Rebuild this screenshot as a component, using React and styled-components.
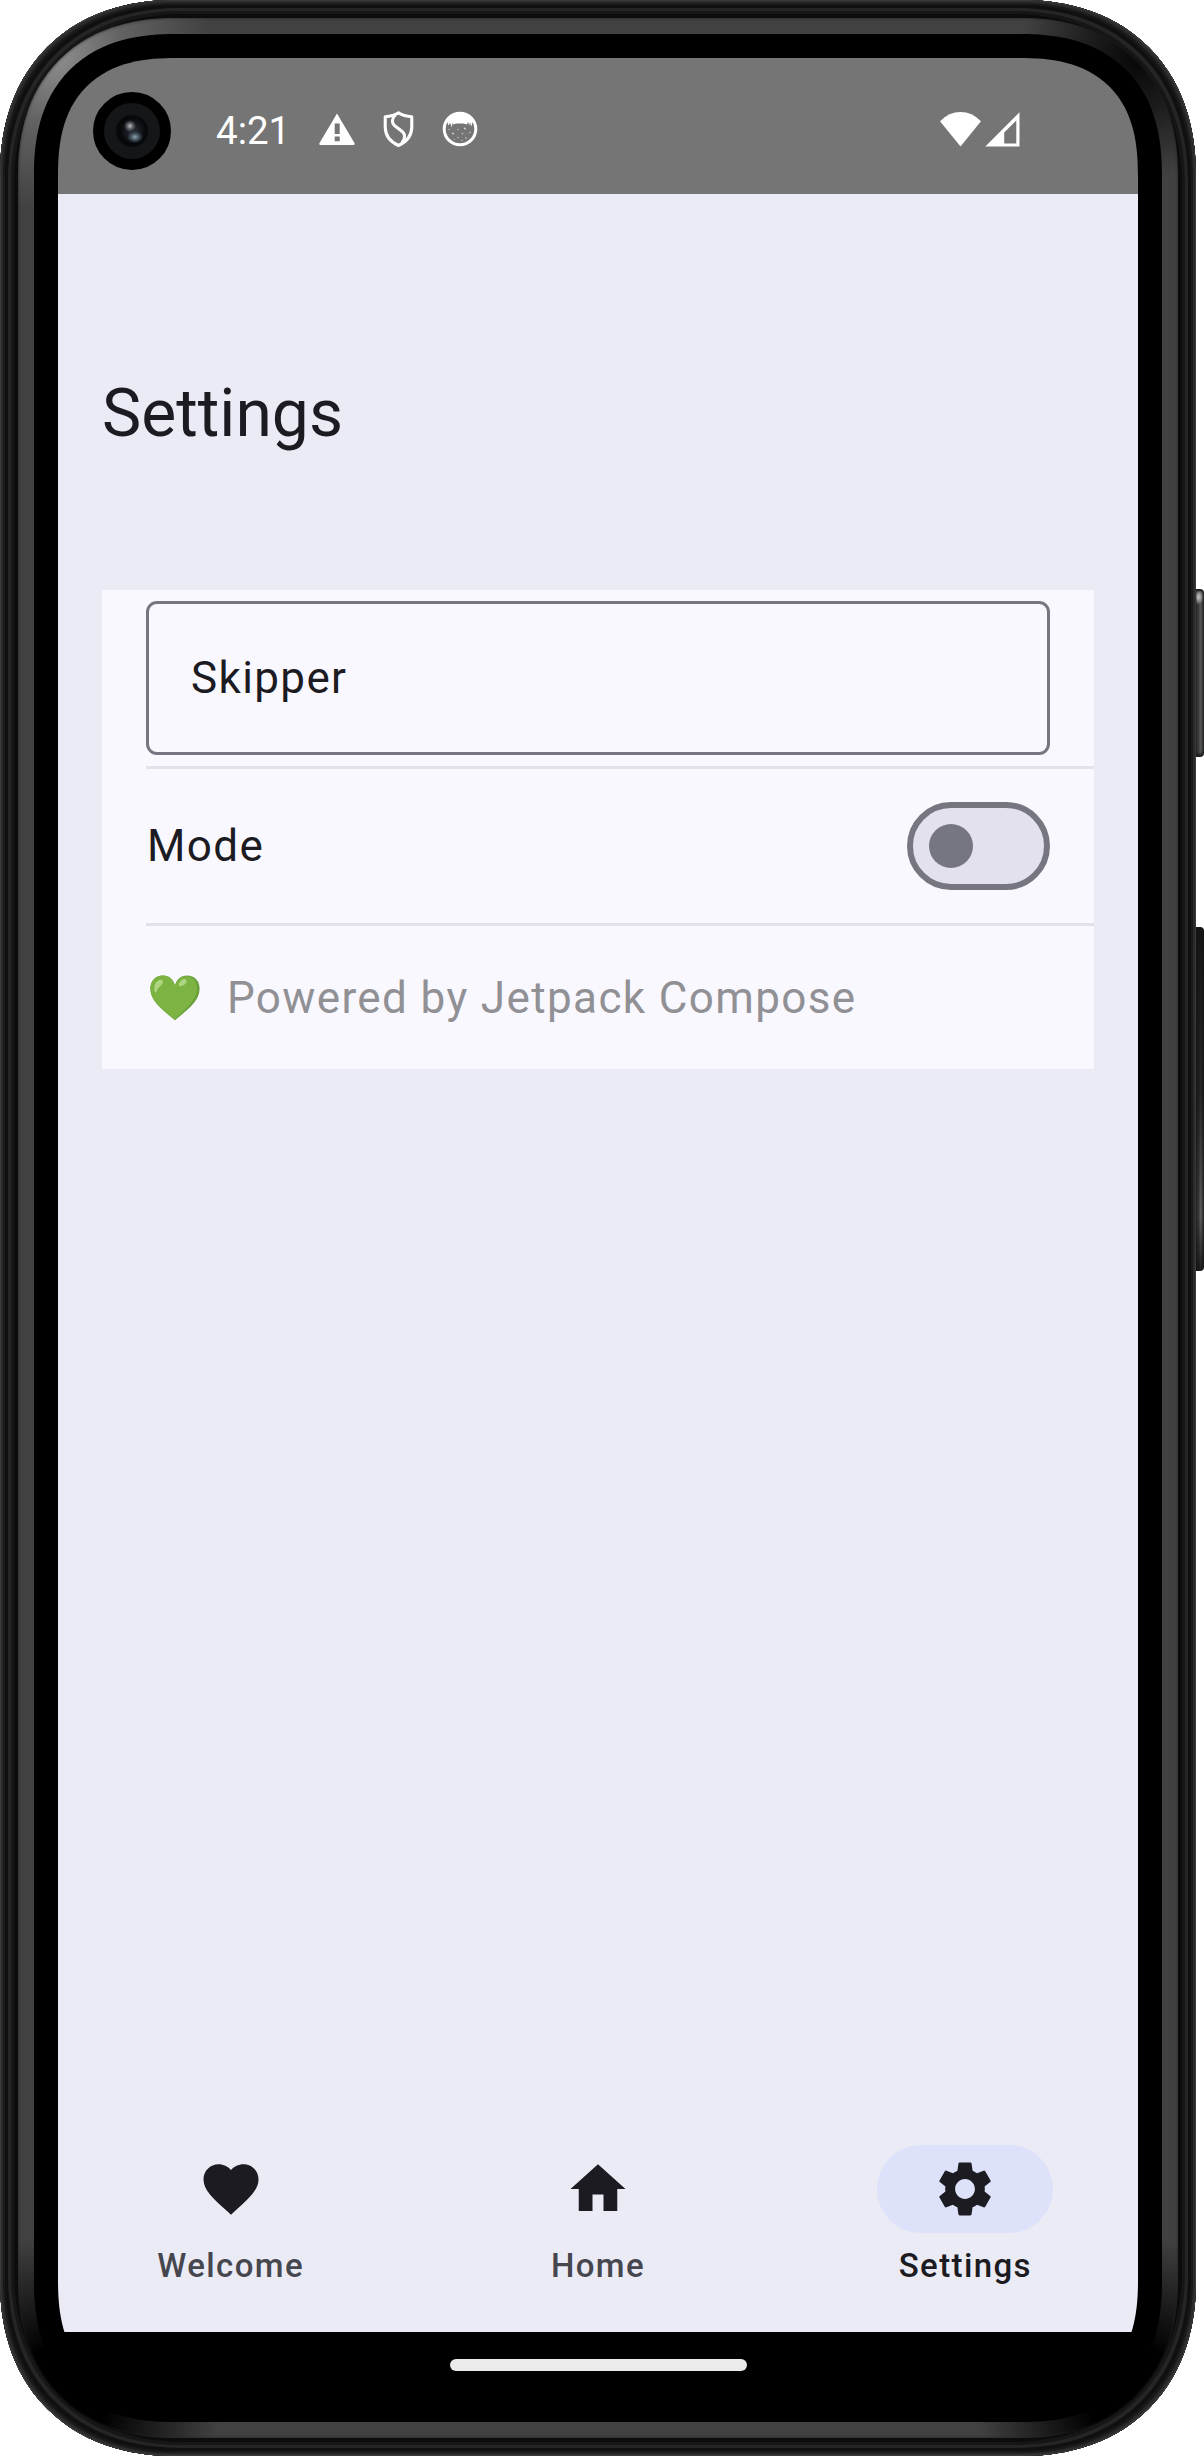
import React from "react";
import styled, { createGlobalStyle, css } from "styled-components";

const GlobalStyle = createGlobalStyle`
  * { box-sizing: border-box; }
  body { margin: 0; background: #ffffff; font-family: Roboto, "Liberation Sans", sans-serif; }
  svg { display: block; flex: none; }
`;

/* Continuous-curvature corners, with plain rounding where corner-shape is unknown. */
const corner = (round, smooth, curve) => css`
  border-radius: ${round}px;
  @supports (corner-shape: superellipse(1.2)) {
    border-radius: ${smooth}px;
    corner-shape: superellipse(${curve});
  }
`;

const Device = styled.div`
  display: flex;
  align-items: flex-start;
  width: 1204px;
  height: 2456px;
`;

const Shell = styled.div`
  width: 1196px;
  height: 2456px;
  padding: 18px;
  ${corner(160, 175, 1.14)}
  background: #101010;
  box-shadow:
    inset 0 0 0 1px #3a3a39,
    inset 0 0 0 3px #2a2a29,
    inset 0 0 0 5px #191919,
    inset 0 0 0 8px #101010,
    inset 0 0 0 11px #252525,
    inset 0 0 0 14px #161616,
    inset 0 0 0 18px #0c0c0c;
`;

const Band = styled.div`
  height: 100%;
  padding: 16px;
  ${corner(142, 157, 1.17)}
  background:
    radial-gradient(circle 160px at 34px 34px, rgba(150, 150, 150, 0.95), rgba(120, 120, 120, 0.6) 45%, transparent),
    radial-gradient(circle 120px at 1122px 40px, rgba(4, 4, 4, 0.95), rgba(10, 10, 10, 0.7) 40%, transparent),
    radial-gradient(circle 160px at 42px 2378px, #000 30%, transparent),
    radial-gradient(circle 160px at 1118px 2378px, #000 30%, transparent),
    #414141;
  box-shadow: inset 0 0 3px #242424;
`;

const Glass = styled.div`
  height: 100%;
  padding: 24px;
  ${corner(124, 141, 1.24)}
  background: #000000;
`;

const Screen = styled.div`
  position: relative;
  display: flex;
  flex-direction: column;
  height: 100%;
  overflow: hidden;
  ${corner(103, 118, 1.32)}
  background: #000000;
`;

const StatusBar = styled.header`
  display: flex;
  align-items: center;
  height: 136px;
  flex: none;
  padding: 6px 118px 0 158px;
  background: #757575;
  color: #ffffff;
`;

const Clock = styled.span`
  width: 74px;
  margin-right: 29px;
  padding-top: 3px;
  font-size: 38.5px;
  line-height: 46px;
`;

const Notifications = styled.div`
  display: flex;
  align-items: center;
  gap: 28px;
  flex: 1;
`;

const Signals = styled.div`
  display: flex;
  align-items: center;
  gap: 4px;
`;

const Camera = styled.div`
  position: absolute;
  top: 34px;
  left: 35px;
  width: 78px;
  height: 78px;
  border-radius: 50%;
  border: 11px solid #000000;
  background:
    radial-gradient(circle 6px at 26px 23px, #b9bcc2, rgba(120, 124, 132, 0.6) 55%, transparent),
    radial-gradient(ellipse 8px 6px at 31px 34px, #8fa3ad, rgba(80, 100, 112, 0.7) 55%, transparent),
    radial-gradient(circle 13px at 29px 28px, #20242a 30%, transparent),
    radial-gradient(circle at 28px 28px, #07080a 15px, #151618 17px);
`;

const Content = styled.main`
  flex: 1;
  padding: 176px 44px 0;
  background: #ebebf5;
`;

const Title = styled.h1`
  margin: 0;
  height: 88px;
  font-size: 66px;
  font-weight: 400;
  line-height: 88px;
  color: #1b1b21;
`;

const Card = styled.section`
  margin-top: 132px;
  padding-left: 44px;
  background: #f9f8ff;
`;

const FieldRow = styled.div`
  height: 179px;
  padding: 11px 44px 0 0;
  border-bottom: 3px solid #e3e1ec;
`;

const Field = styled.div`
  display: flex;
  align-items: center;
  height: 154px;
  padding: 0 41px;
  border: 3px solid #767680;
  border-radius: 11px;
`;

const Row = styled.div`
  display: flex;
  align-items: center;
  height: ${(p) => p.$height}px;
  padding-right: 44px;
  border-bottom: ${(p) => (p.$divided ? "3px solid #e3e1ec" : "none")};
`;

const BodyText = styled.span`
  padding-left: 1px;
  font-size: 44px;
  line-height: 66px;
  letter-spacing: 1.375px;
  color: ${(p) => (p.$muted ? "#909095" : "#1b1b21")};
`;

const Spacer = styled.div`
  flex: 1;
`;

const Switch = styled.div`
  display: flex;
  align-items: center;
  width: 143px;
  height: 88px;
  padding-left: 16px;
  border: 6px solid #767680;
  border-radius: 44px;
  background: #e2e1ec;
`;

const Thumb = styled.div`
  width: 44px;
  height: 44px;
  border-radius: 50%;
  background: #767680;
`;

const HeartSlot = styled.div`
  width: 80px;
  padding-left: 4px;
`;

const NavBar = styled.nav`
  display: flex;
  gap: 22px;
  height: 220px;
  flex: none;
  padding-top: 33px;
  background: #ebebf5;
`;

const NavItem = styled.div`
  display: flex;
  flex: 1;
  flex-direction: column;
  align-items: center;
  gap: 11px;
  color: ${(p) => (p.$active ? "#1b1b21" : "#46464f")};
`;

const Indicator = styled.div`
  display: flex;
  align-items: center;
  justify-content: center;
  width: 176px;
  height: 88px;
  border-radius: 44px;
  color: #1b1b21;
  background: ${(p) => (p.$active ? "#dde1f9" : "transparent")};
`;

const NavLabel = styled.span`
  font-size: 33px;
  font-weight: 500;
  line-height: 44px;
  letter-spacing: 1.375px;
`;

const GestureBar = styled.footer`
  display: flex;
  justify-content: center;
  height: 66px;
  flex: none;
  padding-top: 27px;
  background: #000000;
`;

const GesturePill = styled.div`
  width: 297px;
  height: 12px;
  border-radius: 6px;
  background: #ebebeb;
`;

const SideKeys = styled.div`
  display: flex;
  flex-direction: column;
  gap: 170px;
  width: 8px;
  padding-top: 589px;
`;

const PowerKey = styled.div`
  height: 168px;
  border-radius: 0 4px 4px 0;
  background:
    radial-gradient(ellipse 7px 8px at 1px 8px, #e6e6e6, transparent),
    linear-gradient(90deg, #303131, #3d3e3e 30%, #555656 60%, #2b2c2c);
  box-shadow: inset 0 2px 2px #1d1e1e, inset 0 -3px 3px #1d1e1e;
`;

const VolumeKey = styled.div`
  height: 344px;
  border-radius: 0 4px 4px 0;
  background:
    linear-gradient(180deg, rgba(18, 18, 18, 0.95), rgba(18, 18, 18, 0.7) 50%, transparent 84%, rgba(18, 18, 18, 0.85)),
    linear-gradient(90deg, #202020, #3c3c3c 35%, #606060 60%, #1d1d1d);
`;

const WarningIcon = () => (
  <svg width="36" height="32" viewBox="0 0 36 32">
    <path
      fill="#fff"
      fillRule="evenodd"
      d="M18 0.5 L35.6 30.3 Q36.2 31.8 34.8 31.9 L1.2 31.9 Q-0.2 31.8 0.4 30.3Z M15.7 10.5v10.6h5V10.5z M15.7 23.6v4.7h5v-4.7z"
    />
  </svg>
);

const ShieldIcon = () => (
  <svg width="31" height="38" viewBox="0 0 32 38" fill="none" stroke="#fff" strokeWidth="3.2" strokeLinejoin="round">
    <path d="M16 2.2 C11.5 5.2 7 6 2.3 6.3 V17 C2.3 26 8 32.5 16 36 C24 32.5 29.7 26 29.7 17 V6.3 C25 6 20.5 5.2 16 2.2Z" />
    <path d="M12.5 4.5 C9 8.5 8.7 13 12.4 16 L19.5 21.4 C23.3 24.4 23.2 29 19.6 33.2" />
  </svg>
);

const CatIcon = () => (
  <svg width="36" height="36" viewBox="0 0 36 36">
    <circle cx="18" cy="18" r="15.8" fill="none" stroke="#fff" strokeWidth="3" />
    <path
      fill="#fff"
      d="M5 10 C8 4 13 1.5 18 1.5 C23 1.5 28 4 31 10 L29.2 15.4 L28 11 L27.2 14.6 L26 11 L24.8 13.6 C22.5 12.4 20.5 12.6 18 12.6 C15.5 12.6 13.5 12.4 11.2 13.6 L10.4 11.4 L10 16.2 L8 12 L6.4 14.5Z"
    />
    <g fill="#fff" fillOpacity="0.6">
      <circle cx="23" cy="17.5" r="1.1" />
      <circle cx="11" cy="22.5" r="1.1" />
      <circle cx="16" cy="18.5" r="0.7" />
      <circle cx="20.5" cy="22.5" r="0.8" />
      <circle cx="28" cy="21.5" r="0.8" />
      <circle cx="7" cy="18.5" r="0.7" />
      <circle cx="16" cy="26.5" r="0.7" />
      <circle cx="24" cy="27" r="0.8" />
      <circle cx="20" cy="29.5" r="0.7" />
      <circle cx="12.5" cy="28.5" r="0.5" />
    </g>
  </svg>
);

const WifiIcon = () => (
  <svg width="41" height="35" viewBox="0 0 41 35">
    <path fill="#fff" d="M0 9.2 Q9 0 20.5 0 Q32 0 41 9.2 L20.5 34.5Z" />
  </svg>
);

const CellIcon = () => (
  <svg width="35" height="35" viewBox="0 0 35 35">
    <path fill="#fff" fillRule="evenodd" d="M34.5 0.3 V34.6 H0.3Z M31.3 8.6 L19.2 20.6 V31.4 H31.3Z" />
  </svg>
);

const GreenHeart = () => (
  <svg width="50" height="46" viewBox="0 0 50 46">
    <path
      fill="#689f38"
      d="M25 11 C26.5 4.5 31 0.6 37 0.6 C44.5 0.6 49.6 6 49.6 13.8 C49.6 25 40 33 25 45.2 C10 33 0.4 25 0.4 13.8 C0.4 6 5.5 0.6 13 0.6 C19 0.6 23.5 4.5 25 11Z"
    />
    <path
      fill="#7cb342"
      d="M25 11 C26.5 4.5 30.5 1.2 36 1.2 C42.8 1.2 47 6 47 13.3 C47 24 38.5 32 24.4 44.7 C10 33 0.4 25 0.4 13.8 C0.4 6 5.5 0.6 13 0.6 C19 0.6 23.5 4.5 25 11Z"
    />
    <path fill="#aed581" d="M12.7 5.8 C14 8.2 10.5 11.3 8.8 12.6 C6.8 14.4 7 17 5.9 17.4 C4.3 17.5 3.6 12.7 5 9.2 C6.5 5.8 11 3.3 12.7 5.8Z" />
    <path fill="#aed581" d="M36.2 5.2 C38 8 33 11 30.4 11.3 C27.8 11.3 29 7.6 31 5.8 C33 3.9 35.3 3.5 36.2 5.2Z" />
  </svg>
);

const NAV_ITEMS = [
  {
    label: "Welcome",
    path: "M12 21.35l-1.45-1.32C5.4 15.36 2 12.28 2 8.5 2 5.42 4.42 3 7.5 3c1.74 0 3.41.81 4.5 2.09C13.09 3.81 14.76 3 16.5 3 19.58 3 22 5.42 22 8.5c0 3.78-3.4 6.86-8.55 11.54L12 21.35z",
  },
  { label: "Home", path: "M10 20v-6h4v6h5v-8h3L12 3 2 12h3v8z" },
  {
    label: "Settings",
    active: true,
    path: "M19.14 12.94c.04-.3.06-.61.06-.94 0-.32-.02-.64-.07-.94l2.03-1.58c.18-.14.23-.41.12-.61l-1.92-3.32c-.12-.22-.37-.29-.59-.22l-2.39.96c-.5-.38-1.03-.7-1.62-.94l-.36-2.54c-.04-.24-.24-.41-.48-.41h-3.84c-.24 0-.43.17-.47.41l-.36 2.54c-.59.24-1.13.57-1.62.94l-2.39-.96c-.22-.08-.47 0-.59.22L2.74 8.87c-.12.21-.08.47.12.61l2.03 1.58c-.05.3-.09.63-.09.94s.02.64.07.94l-2.03 1.58c-.18.14-.23.41-.12.61l1.92 3.32c.12.22.37.29.59.22l2.39-.96c.5.38 1.03.7 1.62.94l.36 2.54c.05.24.24.41.48.41h3.84c.24 0 .44-.17.47-.41l.36-2.54c.59-.24 1.13-.56 1.62-.94l2.39.96c.22.08.47 0 .59-.22l1.92-3.32c.12-.22.07-.47-.12-.61l-2.01-1.58zM12 15.6c-1.98 0-3.6-1.62-3.6-3.6s1.62-3.6 3.6-3.6 3.6 1.62 3.6 3.6-1.62 3.6-3.6 3.6z",
  },
];

export default function App() {
  return (
    <>
      <GlobalStyle />
      <Device>
        <Shell>
          <Band>
            <Glass>
              <Screen>
                <StatusBar>
                  <Clock>4:21</Clock>
                  <Notifications>
                    <WarningIcon />
                    <ShieldIcon />
                    <CatIcon />
                  </Notifications>
                  <Signals>
                    <WifiIcon />
                    <CellIcon />
                  </Signals>
                </StatusBar>
                <Camera />
                <Content>
                  <Title>Settings</Title>
                  <Card>
                    <FieldRow>
                      <Field>
                        <BodyText>Skipper</BodyText>
                      </Field>
                    </FieldRow>
                    <Row $height={157} $divided>
                      <BodyText>Mode</BodyText>
                      <Spacer />
                      <Switch>
                        <Thumb />
                      </Switch>
                    </Row>
                    <Row $height={143}>
                      <HeartSlot>
                        <GreenHeart />
                      </HeartSlot>
                      <BodyText $muted>Powered by Jetpack Compose</BodyText>
                    </Row>
                  </Card>
                </Content>
                <NavBar>
                  {NAV_ITEMS.map((item) => (
                    <NavItem key={item.label} $active={item.active}>
                      <Indicator $active={item.active}>
                        <svg width="66" height="66" viewBox="0 0 24 24">
                          <path fill="currentColor" d={item.path} />
                        </svg>
                      </Indicator>
                      <NavLabel>{item.label}</NavLabel>
                    </NavItem>
                  ))}
                </NavBar>
                <GestureBar>
                  <GesturePill />
                </GestureBar>
              </Screen>
            </Glass>
          </Band>
        </Shell>
        <SideKeys>
          <PowerKey />
          <VolumeKey />
        </SideKeys>
      </Device>
    </>
  );
}
